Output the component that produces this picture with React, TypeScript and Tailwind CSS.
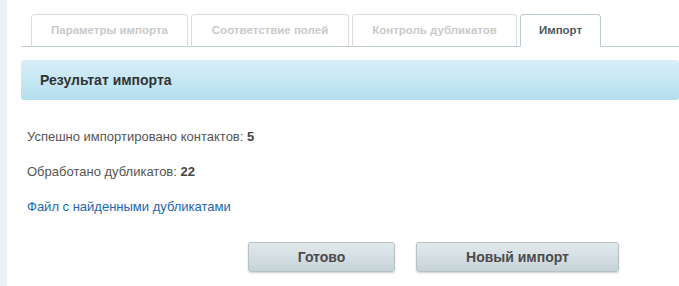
const tabs = [
  { label: "Параметры импорта", w: "w-[157px]", active: false },
  { label: "Соответствие полей", w: "w-[158px]", active: false },
  { label: "Контроль дубликатов", w: "w-[165px]", active: false },
  { label: "Импорт", w: "w-[81px]", active: true },
];

export default function App() {
  return (
    <div className="flex h-[286px] w-[679px] overflow-hidden bg-white font-['Liberation_Sans',Arial,sans-serif]">
      <div className="w-[7px] shrink-0 bg-[#edf1f5]" />
      <div className="flex-1 pl-[14px] pt-[14px]">
        {/* Вкладки */}
        <div className="flex h-[33px] items-end gap-[3px] border-b border-[#c2d0d6] pl-[10px]">
          {tabs.map((t) => (
            <div
              key={t.label}
              className={`${t.w} -mb-px flex h-[33px] items-center justify-center rounded-t-[4px] border text-[11.5px] font-bold ${
                t.active
                  ? "border-[#bccbd2] border-b-white bg-white text-[#505a63]"
                  : "border-[#dcdcdc] border-b-[#c2d0d6] bg-white text-[#c9c9c9]"
              }`}
            >
              {t.label}
            </div>
          ))}
        </div>

        {/* Заголовок */}
        <div className="mt-[13px] flex h-[40px] items-center rounded-[3px] bg-gradient-to-b from-[#d8eff8] to-[#b4dfef] pl-[19px] text-[14px] font-bold text-[#333]">
          Результат импорта
        </div>

        {/* Результат */}
        <div className="pl-[6px] pt-[29px] text-[13px] leading-[16px] text-[#555]">
          <div>
            Успешно импортировано контактов: <b className="text-[#444]">5</b>
          </div>
          <div className="mt-[19px]">
            Обработано дубликатов: <b className="text-[#444]">22</b>
          </div>
          <div className="mt-[19px]">
            <a href="#" className="text-[#2166b1]">
              Файл с найденными дубликатами
            </a>
          </div>
        </div>

        <div className="mt-[27px] flex gap-[21px] pl-[227px]">
          <button className="h-[30px] w-[147px] rounded-[3px] border border-[#b6c3c9] bg-gradient-to-b from-[#e2e9ec] to-[#c7d3d8] text-[14px] font-bold text-[#4b4b4b] shadow-[0_1px_2px_rgba(0,0,0,0.2)]">
            Готово
          </button>
          <button className="h-[30px] w-[203px] rounded-[3px] border border-[#b6c3c9] bg-gradient-to-b from-[#e2e9ec] to-[#c7d3d8] text-[14px] font-bold text-[#4b4b4b] shadow-[0_1px_2px_rgba(0,0,0,0.2)]">
            Новый импорт
          </button>
        </div>
      </div>
    </div>
  );
}
